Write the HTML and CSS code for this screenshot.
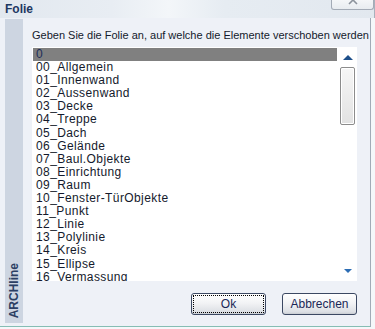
FILE: index.html
```html
<!DOCTYPE html>
<html>
<head>
<meta charset="utf-8">
<link rel="stylesheet" href="styles.css">
</head>
<body>
<div class="window">
  <div class="titlebar">
    <span class="title">Folie</span>
    <div class="close">
      <svg width="12" height="6" viewBox="0 0 12 6"><path d="M2 -4 L10 4 M10 -4 L2 4" stroke="#8c939c" stroke-width="1.6" fill="none"/></svg>
    </div>
  </div>
  <div class="main">
    <div class="sidebar"><span class="brand">ARCHline</span></div>
    <div class="content">
      <div class="label">Geben Sie die Folie an, auf welche die Elemente verschoben werden</div>
      <div class="list">
        <ul class="items">
          <li class="sel">0</li>
          <li>00_Allgemein</li>
          <li>01_Innenwand</li>
          <li>02_Aussenwand</li>
          <li>03_Decke</li>
          <li>04_Treppe</li>
          <li>05_Dach</li>
          <li>06_Gelände</li>
          <li>07_Baul.Objekte</li>
          <li>08_Einrichtung</li>
          <li>09_Raum</li>
          <li>10_Fenster-TürObjekte</li>
          <li>11_Punkt</li>
          <li>12_Linie</li>
          <li>13_Polylinie</li>
          <li>14_Kreis</li>
          <li>15_Ellipse</li>
          <li>16_Vermassung</li>
        </ul>
        <div class="scrollbar">
          <div class="arrow up"></div>
          <div class="thumb"></div>
          <div class="arrow down"></div>
        </div>
      </div>
      <div class="buttons">
        <button class="btn focus"><span>Ok</span></button>
        <button class="btn"><span>Abbrechen</span></button>
      </div>
    </div>
  </div>
</div>
</body>
</html>
```
FILE: styles.css
```css
html, body {
  margin: 0;
  padding: 0;
  background: #f5f7fa;
}
.window {
  width: 375px;
  height: 329px;
  display: flex;
  flex-direction: column;
  font-family: "Liberation Sans", Arial, sans-serif;
  overflow: hidden;
}
.titlebar {
  height: 18px;
  display: flex;
  align-items: flex-start;
  padding-left: 5px;
  background: linear-gradient(90deg, #e2e8ef 0%, #e8edf3 30%, #f3f6f9 45%, #e6ecf2 60%, #e2e8ef 100%);
  border-right: 1px solid #a8b0bc;
  width: 369px;
}
.title {
  font-weight: bold;
  font-size: 12px;
  color: #1d3862;
  margin-top: 2px;
}
.close {
  margin-left: auto;
  margin-right: 0;
  width: 41px;
  height: 9px;
  border: 1px solid #a3abb6;
  border-top: none;
  border-radius: 0 0 3px 3px;
  background: linear-gradient(#f4f6f8, #e8ecf0);
  display: flex;
  justify-content: center;
  align-items: flex-start;
}
.close svg { display: block; }
.main {
  width: 370px;
  height: 308px;
  display: flex;
  background: #eef1f7;
  border-right: 1px solid #a2aab6;
  border-bottom: 1px solid #86bdb4;
}
.sidebar {
  width: 18px;
  margin: 1px 0 3px 5px;
  background: #cdd5e1;
  display: flex;
  align-items: flex-end;
  justify-content: center;
}
.brand {
  writing-mode: vertical-rl;
  transform: rotate(180deg);
  font-weight: bold;
  font-size: 12px;
  color: #2b3e63;
  padding-top: 5px;
  line-height: 18px;
}
.content {
  margin-left: 9px;
  display: flex;
  flex-direction: column;
  width: 325px;
}
.label {
  margin-top: 11px;
  font-size: 11px;
  line-height: 13px;
  color: #141a2c;
  white-space: nowrap;
}
.list {
  margin-top: 5px;
  height: 234px;
  background: #ffffff;
  display: flex;
  overflow: hidden;
}
.items {
  list-style: none;
  margin: 1px 0 0 1px;
  padding: 0;
  width: 305px;
}
.items li {
  height: 13.1px;
  line-height: 13px;
  font-size: 12px;
  letter-spacing: 0.4px;
  padding-left: 3px;
  color: #141a2c;
  white-space: nowrap;
}
.items li.sel {
  background: #808080;
  color: #1c2d58;
}
.scrollbar {
  width: 19px;
  display: flex;
  flex-direction: column;
  align-items: center;
  padding-left: 1px;
}
.arrow {
  width: 0;
  height: 0;
}
.arrow.up {
  margin-top: 8px;
  border-left: 5px solid transparent;
  border-right: 5px solid transparent;
  border-bottom: 5px solid #1d4f8a;
}
.thumb {
  margin-top: 7px;
  width: 13px;
  height: 56px;
  border: 1px solid #8c8c8c;
  border-radius: 2px;
  box-shadow: inset 0 0 0 1px #ffffff;
  background: linear-gradient(#f6f6f6, #e2e2e2);
}
.arrow.down {
  margin-top: auto;
  margin-bottom: 8px;
  border-left: 4px solid transparent;
  border-right: 4px solid transparent;
  border-top: 4px solid #2c6db4;
}
.buttons {
  margin-top: 12px;
  display: flex;
  justify-content: flex-end;
  gap: 16px;
}
.btn {
  width: 75px;
  height: 22px;
  padding: 0;
  border: 1px solid #3b4862;
  border-radius: 3px;
  background: linear-gradient(#ffffff 0%, #f2f3f5 45%, #dcdfe4 90%, #c8ccd2 100%);
  font-family: "Liberation Sans", Arial, sans-serif;
  font-size: 12px;
  color: #1a2756;
  display: flex;
  align-items: center;
  justify-content: center;
}
.btn.focus span {
  display: flex;
  align-items: center;
  justify-content: center;
  width: 69px;
  height: 16px;
  outline: 1px dotted #000000;
}
```
